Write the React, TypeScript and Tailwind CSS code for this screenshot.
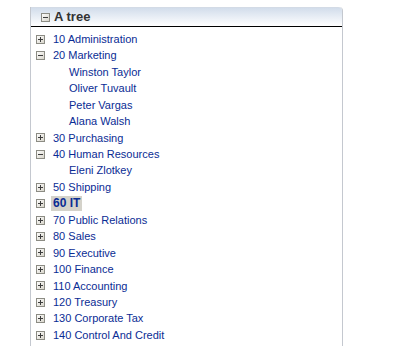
import React from 'react';

type Node = { label: string; expanded?: boolean; selected?: boolean; children?: string[] };

const tree: Node[] = [
  { label: '10 Administration' },
  { label: '20 Marketing', expanded: true, children: ['Winston Taylor', 'Oliver Tuvault', 'Peter Vargas', 'Alana Walsh'] },
  { label: '30 Purchasing' },
  { label: '40 Human Resources', expanded: true, children: ['Eleni Zlotkey'] },
  { label: '50 Shipping' },
  { label: '60 IT', selected: true },
  { label: '70 Public Relations' },
  { label: '80 Sales' },
  { label: '90 Executive' },
  { label: '100 Finance' },
  { label: '110 Accounting' },
  { label: '120 Treasury' },
  { label: '130 Corporate Tax' },
  { label: '140 Control And Credit' },
];

const Toggle: React.FC<{ open?: boolean }> = ({ open }) => (
  <svg width="9" height="9" viewBox="0 0 9 9" className="shrink-0">
    <defs>
      <linearGradient id={open ? 'tgo' : 'tgc'} x1="0" y1="0" x2="1" y2="1">
        <stop offset="0" stopColor="#ffffff" />
        <stop offset="1" stopColor="#d6d3c8" />
      </linearGradient>
    </defs>
    <rect x="0.5" y="0.5" width="8" height="8" fill={`url(#${open ? 'tgo' : 'tgc'})`} stroke="#8c8c84" />
    <rect x="2" y="4" width="5" height="1" fill="#3c3c3c" />
    {!open && <rect x="4" y="2" width="1" height="5" fill="#3c3c3c" />}
  </svg>
);

const Row: React.FC<{ node: Node }> = ({ node }) => (
  <div className="flex h-[16.45px] items-center">
    <div className="flex w-[17px] justify-start">
      <Toggle open={node.expanded} />
    </div>
    <span
      className={
        node.selected
          ? 'bg-[#d4d2ca] px-[2px] ml-[-2px] font-bold text-[12px] leading-[15px] text-[#0a2c94]'
          : 'text-[#0a2c94]'
      }
    >
      {node.label}
    </span>
  </div>
);

export default function App() {
  return (
    <div className="min-h-[346px] bg-white pl-[30px] pt-[7px] font-['Liberation_Sans',Arial,sans-serif] text-[11px]">
      <div className="w-[313px] border-r border-l border-[#c4c8cf] rounded-tr-[4px]">
        <div className="flex h-[20px] items-center border-b border-black border-t border-t-[#d3dbe6] bg-gradient-to-b from-[#d2ddeb] to-[#ffffff] pl-[10px] rounded-tr-[4px]">
          <Toggle open />
          <span className="ml-[4px] text-[13px] font-bold text-[#333333]">A tree</span>
        </div>
        <div className="pl-[5px] pt-[4px] pb-[20px]">
          {tree.map((n) => (
            <React.Fragment key={n.label}>
              <Row node={n} />
              {n.expanded &&
                n.children?.map((c) => (
                  <div key={c} className="flex h-[16.45px] items-center pl-[33px] text-[#0a2c94]">
                    {c}
                  </div>
                ))}
            </React.Fragment>
          ))}
        </div>
      </div>
    </div>
  );
}
